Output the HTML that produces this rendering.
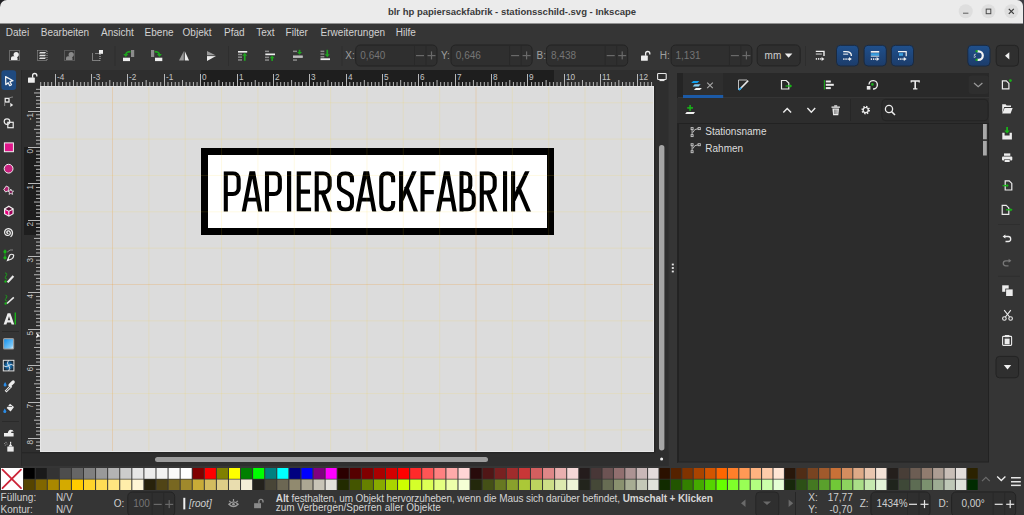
<!DOCTYPE html>
<html><head><meta charset="utf-8"><title>Inkscape</title>
<style>
html,body{margin:0;padding:0;background:#353535;}
#app{position:relative;width:1024px;height:515px;overflow:hidden;font-family:"Liberation Sans", sans-serif;}
#app svg{position:absolute;left:0;top:0;}
.t{position:absolute;white-space:nowrap;line-height:1;font-family:"Liberation Sans", sans-serif;}
svg text{font-family:"Liberation Sans", sans-serif;}
</style></head><body>
<div id="app">
<svg width="1024" height="515" viewBox="0 0 1024 515">
<style>.rl text{font-size:8.2px;fill:#c4c4c4;}</style>
<rect x="0" y="0" width="1024" height="515" fill="#353535"/><rect x="0" y="0" width="10" height="10" fill="#202024"/><rect x="1012" y="0" width="12" height="24" fill="#3c3c42"/><path d="M0,7 A7,7 0 0 1 7,0 H1017 A6,6 0 0 1 1023,6 V23.6 H0 Z" fill="#ebebeb"/><circle cx="965.7" cy="11.2" r="7" fill="#dedede"/><circle cx="988.4" cy="11.2" r="7" fill="#dedede"/><circle cx="1011.4" cy="11.2" r="7" fill="#dedede"/><rect x="963" y="12.6" width="5.4" height="1.3" fill="#7a7a7a"/><rect x="986.2" y="9.1" width="4.6" height="4.6" fill="none" stroke="#4a4a4a" stroke-width="1"/><path d="M1008.8,8.9 L1013.8,13.9 M1013.8,8.9 L1008.8,13.9" stroke="#3a3a3a" stroke-width="1.2"/><rect x="114.5" y="46" width="1" height="20" fill="#2e2e2e"/><rect x="228" y="46" width="1" height="20" fill="#2e2e2e"/><rect x="341.5" y="46" width="1" height="20" fill="#2e2e2e"/><rect x="805" y="46" width="1" height="20" fill="#2e2e2e"/><rect x="9.5" y="50.5" width="10" height="10" fill="none" stroke="#a0a0a0" stroke-width="1" stroke-dasharray="1 1"/><circle cx="16.2" cy="54.5" r="2.6" fill="#eeeeee"/><path d="M11,60 V57.8 Q11,56.3 13,56.3 H15.5 Q17.5,56.8 17.5,58 V60 Z" fill="#eeeeee"/><rect x="37.5" y="50.5" width="9.5" height="10" fill="none" stroke="#a0a0a0" stroke-width="1" stroke-dasharray="1 1"/><path d="M40,52 H46 L45,53.6 H39 Z M40,54.7 H46 L45,56.3 H39 Z M40,57.4 H46 L45,59 H39 Z" fill="#e0e0e0"/><rect x="64.5" y="50.5" width="10" height="10" fill="none" stroke="#7a7a7a" stroke-width="1" stroke-dasharray="1 1"/><circle cx="71.2" cy="54.5" r="2.6" fill="#8a8a8a"/><path d="M66,60 V57.8 Q66,56.3 68,56.3 H70.5 Q72.5,56.8 72.5,58 V60 Z" fill="#8a8a8a"/><path d="M92.5,53.5 V60.5 H100 V53.5 H95" fill="none" stroke="#c8c8c8" stroke-width="1" stroke-dasharray="1 1"/><rect x="99" y="50" width="4" height="3.8" fill="#f0f0f0"/><rect x="131" y="50" width="3.2" height="7" fill="#8c8c8c"/><rect x="123" y="57.7" width="7" height="3.4" fill="#eeeeee"/><path d="M130.5,51.6 Q126.3,51.6 125.8,54.5" fill="none" stroke="#1ea51e" stroke-width="1.6"/><path d="M123.3,54 H128.3 L125.8,57 Z" fill="#1ea51e"/><rect x="151" y="50" width="3.2" height="7" fill="#8c8c8c"/><rect x="155" y="57.7" width="7.3" height="3.4" fill="#eeeeee"/><path d="M154.7,51.6 Q158.9,51.6 159.4,54.5" fill="none" stroke="#1ea51e" stroke-width="1.6"/><path d="M156.9,54 H161.9 L159.4,57 Z" fill="#1ea51e"/><path d="M183.9,51 V60.6 H179 Z" fill="#9a9a9a"/><path d="M184.7,51 L189.1,60.6 H184.7 Z" fill="#eeeeee"/><path d="M184.3,50.5 V61.5" stroke="#353535" stroke-width="0.9" stroke-dasharray="1 1"/><path d="M207,51 L216,55.4 H207 Z" fill="#9a9a9a"/><path d="M207,56.1 H216 L207,61 Z" fill="#eeeeee"/><path d="M205.5,55.75 H217" stroke="#353535" stroke-width="0.9" stroke-dasharray="1 1"/><rect x="238" y="51" width="9.2" height="1.6" fill="#eeeeee"/><rect x="238" y="53.7" width="4" height="1.5" fill="#8c8c8c"/><rect x="238" y="56.4" width="4" height="1.5" fill="#8c8c8c"/><rect x="238" y="59.2" width="4" height="1.5" fill="#8c8c8c"/><rect x="243.9" y="55" width="1.7" height="5.8" fill="#1ea51e"/><path d="M242.3,55.8 H247.2 L244.75,52.8 Z" fill="#1ea51e"/><rect x="265" y="50.6" width="4" height="1.5" fill="#8c8c8c"/><rect x="265.3" y="53.5" width="9.7" height="1.7" fill="#eeeeee"/><rect x="265" y="56.6" width="4" height="1.5" fill="#8c8c8c"/><rect x="265" y="59.3" width="4" height="1.5" fill="#8c8c8c"/><rect x="271.3" y="57.5" width="1.7" height="3.4" fill="#1ea51e"/><path d="M269.7,58.2 H274.6 L272.15,55.4 Z" fill="#1ea51e"/><rect x="293" y="50.6" width="4" height="1.5" fill="#8c8c8c"/><rect x="293" y="55.6" width="9.7" height="2.2" fill="#8c8c8c" opacity="1"/><rect x="293" y="59.3" width="4" height="1.5" fill="#8c8c8c"/><rect x="293" y="55.6" width="9.7" height="2.2" fill="#bdbdbd"/><rect x="298.7" y="49.8" width="1.7" height="2.6" fill="#1ea51e"/><path d="M297.1,52 H302 L299.55,54.8 Z" fill="#1ea51e"/><rect x="320.5" y="50.6" width="3.8" height="1.5" fill="#8c8c8c"/><rect x="320.5" y="53.3" width="3.8" height="1.5" fill="#8c8c8c"/><rect x="320.5" y="56" width="3.8" height="1.5" fill="#8c8c8c"/><rect x="320.5" y="58.3" width="9.5" height="1.8" fill="#eeeeee"/><rect x="326.4" y="49.8" width="1.7" height="5" fill="#1ea51e"/><path d="M324.8,54.3 H329.7 L327.25,57.3 Z" fill="#1ea51e"/><rect x="355.7" y="45.0" width="81.30000000000001" height="21.0" rx="4.5" fill="#2f2f2f" stroke="#232323" stroke-width="1"/><rect x="414.0" y="45.5" width="1" height="20.0" fill="#292929"/><rect x="425.5" y="45.5" width="1" height="20.0" fill="#292929"/><rect x="416.0" y="55.0" width="8" height="1.2" fill="#6a6a6a"/><rect x="427.5" y="55.0" width="8" height="1.2" fill="#6a6a6a"/><rect x="430.9" y="51.4" width="1.2" height="8" fill="#6a6a6a"/><rect x="451.0" y="45.0" width="81.10000000000002" height="21.0" rx="4.5" fill="#2f2f2f" stroke="#232323" stroke-width="1"/><rect x="509.1" y="45.5" width="1" height="20.0" fill="#292929"/><rect x="520.6" y="45.5" width="1" height="20.0" fill="#292929"/><rect x="511.1" y="55.0" width="8" height="1.2" fill="#6a6a6a"/><rect x="522.6" y="55.0" width="8" height="1.2" fill="#6a6a6a"/><rect x="526.0" y="51.4" width="1.2" height="8" fill="#6a6a6a"/><rect x="546.5" y="45.0" width="81.20000000000005" height="21.0" rx="4.5" fill="#2f2f2f" stroke="#232323" stroke-width="1"/><rect x="604.7" y="45.5" width="1" height="20.0" fill="#292929"/><rect x="616.2" y="45.5" width="1" height="20.0" fill="#292929"/><rect x="606.7" y="55.0" width="8" height="1.2" fill="#6a6a6a"/><rect x="618.2" y="55.0" width="8" height="1.2" fill="#6a6a6a"/><rect x="621.6" y="51.4" width="1.2" height="8" fill="#6a6a6a"/><rect x="671.1" y="45.0" width="80.79999999999995" height="21.0" rx="4.5" fill="#2f2f2f" stroke="#232323" stroke-width="1"/><rect x="728.9" y="45.5" width="1" height="20.0" fill="#292929"/><rect x="740.4" y="45.5" width="1" height="20.0" fill="#292929"/><rect x="730.9" y="55.0" width="8" height="1.2" fill="#6a6a6a"/><rect x="742.4" y="55.0" width="8" height="1.2" fill="#6a6a6a"/><rect x="745.8" y="51.4" width="1.2" height="8" fill="#6a6a6a"/><rect x="641" y="55.6" width="6.8" height="5.2" rx="0.6" fill="#eeeeee"/><path d="M645.6,55.8 V53.6 A2.1,2.1 0 0 1 649.8,53.6 V54.6" fill="none" stroke="#eeeeee" stroke-width="1.3"/><rect x="757.2" y="44.9" width="43" height="21" rx="4.5" fill="#2f2f2f" stroke="#232323" stroke-width="1"/><path d="M784.8,53.6 H792.4 L788.6,57.7 Z" fill="#eeeeee"/><rect x="815.8" y="58.1" width="1.3" height="1.6" fill="#f0f0f0"/><rect x="818.0" y="58.1" width="1.3" height="1.6" fill="#f0f0f0"/><rect x="820.1999999999999" y="58.1" width="1.3" height="1.6" fill="#f0f0f0"/><path d="M821.5999999999999,56.9 L824.4,58.900000000000006 L821.5999999999999,60.900000000000006 Z" fill="#f0f0f0"/><path d="M815.8,51.4 H824.0 V56.1" fill="none" stroke="#f0f0f0" stroke-width="1.4"/><rect x="815.8" y="53.2" width="6" height="1.7" fill="#9a9a9a"/><defs><linearGradient id="bg1" x1="0" y1="0" x2="0" y2="1"><stop offset="0" stop-color="#20508c"/><stop offset="1" stop-color="#1c3c6a"/></linearGradient></defs><rect x="836.5" y="45.3" width="22" height="20.7" rx="4" fill="url(#bg1)" stroke="#1a2a40" stroke-width="1"/><rect x="843.2" y="58.3" width="1.3" height="1.6" fill="#f0f0f0"/><rect x="845.4000000000001" y="58.3" width="1.3" height="1.6" fill="#f0f0f0"/><rect x="847.6" y="58.3" width="1.3" height="1.6" fill="#f0f0f0"/><path d="M849.0,57.099999999999994 L851.8000000000001,59.099999999999994 L849.0,61.099999999999994 Z" fill="#f0f0f0"/><path d="M843.2,51.599999999999994 H846.2 Q851.4000000000001,51.599999999999994 851.4000000000001,56.0" fill="none" stroke="#f0f0f0" stroke-width="1.4"/><rect x="843.2" y="53.4" width="5" height="1.6" fill="#a8b8cc"/><rect x="864.1" y="45.3" width="22.199999999999932" height="20.7" rx="4" fill="url(#bg1)" stroke="#1a2a40" stroke-width="1"/><rect x="870.8000000000001" y="58.3" width="1.3" height="1.6" fill="#f0f0f0"/><rect x="873.0000000000001" y="58.3" width="1.3" height="1.6" fill="#f0f0f0"/><rect x="875.2" y="58.3" width="1.3" height="1.6" fill="#f0f0f0"/><path d="M876.6,57.099999999999994 L879.4000000000001,59.099999999999994 L876.6,61.099999999999994 Z" fill="#f0f0f0"/><rect x="870.8000000000001" y="51.0" width="8.4" height="1.6" fill="#f0f0f0"/><rect x="870.8000000000001" y="53.199999999999996" width="8.4" height="2.6" fill="#3aa0e0"/><rect x="870.8000000000001" y="55.8" width="8.4" height="0.8" fill="#f0f0f0"/><rect x="891.3" y="45.3" width="22.200000000000045" height="20.7" rx="4" fill="url(#bg1)" stroke="#1a2a40" stroke-width="1"/><rect x="898.0" y="58.3" width="1.3" height="1.6" fill="#f0f0f0"/><rect x="900.2" y="58.3" width="1.3" height="1.6" fill="#f0f0f0"/><rect x="902.4" y="58.3" width="1.3" height="1.6" fill="#f0f0f0"/><path d="M903.8,57.099999999999994 L906.6,59.099999999999994 L903.8,61.099999999999994 Z" fill="#f0f0f0"/><path d="M898.0,51.599999999999994 H906.2 V56.3" fill="none" stroke="#f0f0f0" stroke-width="1.2"/><rect x="899.0" y="53.199999999999996" width="4" height="2.6" fill="#3aa0e0"/><rect x="967.8" y="45.3" width="22.2" height="20.8" rx="4" fill="url(#bg1)" stroke="#1a2a40" stroke-width="1"/><path d="M977.3,51.3 H978.5 A4.3,4.3 0 0 1 978.5,59.9 H977.3" fill="none" stroke="#f4f4f4" stroke-width="2.2"/><rect x="975.6" y="50.2" width="2" height="2" fill="#19b319"/><rect x="975.6" y="58.8" width="2" height="2" fill="#19b319"/><path d="M975.8,54.2 Q973.8,54.2 974.2,55.4 Q975.8,56 975.2,57.2 Q974.4,57.6 973.6,57" fill="none" stroke="#e0e0e0" stroke-width="0.8"/><rect x="996.2" y="45.3" width="22.3" height="20.8" rx="4" fill="#2f2f2f" stroke="#232323" stroke-width="1"/><path d="M1009.3,52.2 V59.4 L1005,55.8 Z" fill="#f0f0f0"/><rect x="21" y="70" width="1.2" height="396" fill="#282828"/><rect x="1.4" y="70.3" width="14.7" height="19.6" rx="3" fill="#1f4a80"/><path d="M5.6,76.6 L13,80.7 L10,81.7 L11.5,84.7 L9.7,85.7 L8.2,82.7 L5.8,84.7 Z" fill="none" stroke="#f4f4f4" stroke-width="1.25" stroke-linejoin="round"/><rect x="5.2" y="98.4" width="3.8" height="3.6" fill="none" stroke="#ececec" stroke-width="1.3"/><path d="M9,98.2 Q11,97 13,97" fill="none" stroke="#9a9a9a" stroke-width="0.8"/><path d="M4.7,102.5 V106" stroke="#9a9a9a" stroke-width="0.9"/><path d="M10.3,102.8 V107 L13.2,105 Z" fill="#ececec"/><circle cx="7" cy="121.6" r="2.8" fill="none" stroke="#ececec" stroke-width="1.2"/><rect x="7.8" y="122.3" width="5.4" height="5.4" fill="none" stroke="#ececec" stroke-width="1.2"/><rect x="4.4" y="142.9" width="9" height="8.8" fill="#e0168a" stroke="#f2f2f2" stroke-width="1"/><circle cx="8.6" cy="168.7" r="4.4" fill="#c8217f" stroke="#f2f2f2" stroke-width="1"/><path d="M6.3,186 L9,187.5 L8.6,190.6 L5.6,192 L3.8,189.4 Z" fill="#b0206f" stroke="#f0f0f0" stroke-width="0.9"/><path d="M10.8,189 L11.6,191 L13.6,191.2 L12.1,192.5 L12.6,194.4 L10.8,193.4 L9,194.4 L9.5,192.5 L8,191.2 L10,191 Z" fill="#7a1550" stroke="#f0f0f0" stroke-width="0.8"/><path d="M8.85,205.6 L13.7,208.4 V214.1 L8.85,216.8 L4,214.1 V208.4 Z" fill="#f0f0f0"/><path d="M8.85,207 L12.2,208.9 L8.85,210.8 L5.5,208.9 Z" fill="#5a1538"/><path d="M5.2,209.9 L8.3,211.6 V215.3 L5.2,213.6 Z" fill="#e6007e"/><path d="M12.5,209.9 L9.4,211.6 V215.3 L12.5,213.6 Z" fill="#a0005a"/><path d="M8.20,232.95 L8.18,233.00 L8.15,233.05 L8.11,233.10 L8.06,233.14 L8.00,233.18 L7.94,233.22 L7.86,233.24 L7.79,233.26 L7.70,233.27 L7.62,233.26 L7.53,233.25 L7.44,233.22 L7.35,233.19 L7.26,233.14 L7.18,233.07 L7.10,233.00 L7.03,232.92 L6.96,232.82 L6.91,232.71 L6.87,232.60 L6.84,232.48 L6.82,232.35 L6.82,232.22 L6.83,232.08 L6.86,231.94 L6.91,231.80 L6.97,231.67 L7.05,231.54 L7.14,231.42 L7.25,231.30 L7.37,231.20 L7.51,231.10 L7.67,231.03 L7.83,230.96 L8.00,230.92 L8.18,230.89 L8.37,230.88 L8.55,230.89 L8.74,230.93 L8.93,230.98 L9.12,231.06 L9.30,231.16 L9.47,231.28 L9.63,231.42 L9.78,231.57 L9.91,231.75 L10.02,231.94 L10.11,232.15 L10.18,232.37 L10.23,232.60 L10.26,232.84 L10.26,233.08 L10.23,233.32 L10.17,233.57 L10.09,233.81 L9.98,234.04 L9.85,234.27 L9.69,234.48 L9.51,234.67 L9.30,234.85 L9.07,235.01 L8.83,235.14 L8.56,235.25 L8.29,235.33 L8.00,235.38 L7.71,235.40 L7.41,235.39 L7.11,235.35 L6.81,235.28 L6.52,235.17 L6.23,235.03 L5.97,234.86 L5.71,234.66 L5.48,234.43 L5.27,234.17 L5.09,233.90 L4.93,233.60 L4.81,233.28 L4.72,232.94 L4.67,232.60 L4.65,232.25 L4.67,231.89 L4.73,231.54 L4.82,231.18 L4.95,230.84 L5.13,230.51 L5.33,230.20 L5.57,229.90 L5.85,229.64 L6.15,229.40 L6.48,229.19 L6.83,229.01 L7.21,228.87 L7.60,228.77 L8.00,228.72 L8.41,228.70 L8.82,228.73 L9.23,228.80 L9.64,228.92 L10.03,229.08 L10.41,229.28 L10.77,229.52 L11.10,229.81 L11.41,230.12 L11.68,230.47 L11.92,230.86 L12.11,231.26 L12.26,231.69 L12.37,232.14 L12.43,232.60 L12.45,233.07 L12.41,233.54 L12.32,234.00 L12.18,234.46 L12.00,234.91 L11.76,235.34 L11.49,235.74 L11.16,236.11 L10.80,236.45 L10.40,236.76" fill="none" stroke="#ececec" stroke-width="1.3"/><path d="M5,249.5 V258" stroke="#1aa01a" stroke-width="0.9"/><circle cx="5" cy="251.7" r="1.6" fill="#19b319"/><circle cx="5" cy="257.8" r="1.6" fill="#19b319"/><path d="M7.3,252 Q10,249 13,250" fill="none" stroke="#9a9a9a" stroke-width="0.8"/><path d="M7.5,260.5 L9.6,255.2 Q11.6,253.4 13.6,255 Q14,257.6 11.6,259 Z" fill="none" stroke="#ececec" stroke-width="1.2"/><path d="M5,273 Q8,273 6,276 Q4,279 7,279" fill="none" stroke="#19a019" stroke-width="1"/><circle cx="5.5" cy="281.5" r="1.2" fill="#19b319"/><path d="M6.8,281.7 L12.6,275.2 L14.2,276.7 L8.4,283 Z" fill="#ececec"/><path d="M5.5,294.8 Q8,296 6,298.5 Q4,301 7.2,301" fill="none" stroke="#19a019" stroke-width="1"/><circle cx="5.6" cy="303.5" r="1.2" fill="#19b319"/><path d="M7,303.5 L13.8,297.3" stroke="#ececec" stroke-width="1.6"/><path d="M3.6,324.6 L7.6,313.2 H10.4 L14.2,324.6 H11.6 L10.9,322.4 H7.1 L6.4,324.6 Z M7.7,320.3 H10.3 L9,316.2 Z" fill="#ececec" fill-rule="evenodd"/><rect x="14.6" y="312.5" width="1.4" height="12" fill="#19b319"/><rect x="2" y="331" width="17" height="1" fill="#2a2a2a"/><defs><linearGradient id="gr1" x1="0" y1="0" x2="1" y2="1"><stop offset="0" stop-color="#0a8ef0"/><stop offset="0.75" stop-color="#7cc8f8"/><stop offset="1" stop-color="#ffffff"/></linearGradient></defs><rect x="3.6" y="338.6" width="10" height="10.4" rx="1" fill="url(#gr1)" stroke="#9a9a9a" stroke-width="1.2"/><defs><radialGradient id="mg1"><stop offset="0" stop-color="#2aa0f0"/><stop offset="0.6" stop-color="#155a90"/><stop offset="1" stop-color="#1a2a38"/></radialGradient></defs><rect x="3.3" y="360.3" width="10.6" height="10.6" fill="url(#mg1)" stroke="#e0e0e0" stroke-width="1"/><path d="M8.6,360.3 Q6.2,363 8.6,365.6 Q11,368.2 8.6,370.9 M3.3,365.6 Q6.2,368 8.6,365.6 Q11,363.2 13.9,365.6" fill="none" stroke="#e8e8e8" stroke-width="0.9"/><path d="M5.1,382 Q3.6,384.3 3.6,385 A1.5,1.5 0 0 0 6.6,385 Q6.6,384.3 5.1,382 Z" fill="#2b8ce6"/><path d="M5.6,391.6 L10.8,386.4" stroke="#ececec" stroke-width="2.6"/><path d="M6.3,390.9 L10.4,386.8" stroke="#353535" stroke-width="0.9"/><path d="M10,385.2 L13.2,382" stroke="#ececec" stroke-width="3.2" stroke-linecap="round"/><path d="M9.2,384.6 L11.8,387.2" stroke="#ececec" stroke-width="1.2"/><path d="M6.6,408 L10,403.8 L14,407 L10.6,411.4 Z" fill="#ececec"/><path d="M7.4,406.5 H12" stroke="#353535" stroke-width="0.7"/><path d="M4.8,408.5 Q3.3,410.8 3.3,411.6 A1.5,1.5 0 0 0 6.3,411.6 Q6.3,410.8 4.8,408.5 Z" fill="#2b8ce6"/><rect x="2" y="421" width="17" height="1" fill="#2a2a2a"/><path d="M4,436.5 V433 H7.8 Q8.2,430 10.8,429.8 Q13.4,430 13.6,431.8 Q12,431 11,432 Q10.5,433 13.6,433 V436.5 Z" fill="#ececec"/><rect x="7.3" y="446.6" width="6.4" height="5" fill="#ececec"/><path d="M8.4,446.6 L10.5,443.6 L12.6,446.6 Z" fill="#ececec"/><rect x="10" y="441.8" width="1.2" height="2" fill="#ececec"/><circle cx="4.6" cy="443.5" r="0.6" fill="#9a9a9a"/><circle cx="6" cy="442.4" r="0.6" fill="#9a9a9a"/><circle cx="5.3" cy="445" r="0.6" fill="#9a9a9a"/><circle cx="7" cy="444" r="0.6" fill="#9a9a9a"/><rect x="22" y="70" width="632" height="16" fill="#2e2e2e"/><rect x="22" y="86" width="18" height="366" fill="#2e2e2e"/><rect x="201" y="70" width="353" height="16" fill="#1e1e1e"/><rect x="24" y="147" width="16" height="88" fill="#1e1e1e"/><rect x="28" y="77.6" width="6.8" height="5.2" rx="0.6" fill="#eeeeee"/><path d="M32.6,77.8 V75.6 A2.1,2.1 0 0 1 36.8,75.6 V76.6" fill="none" stroke="#eeeeee" stroke-width="1.3"/><g class="rl" fill="#b8b8b8"><rect x="40.22" y="82" width="1" height="4"/><rect x="43.85" y="82" width="1" height="4"/><rect x="47.49" y="82" width="1" height="4"/><rect x="51.12" y="82" width="1" height="4"/><rect x="55" y="74" width="1" height="12"/><text x="57" y="79.6">-4</text><rect x="58.4" y="82" width="1" height="4"/><rect x="62.03" y="82" width="1" height="4"/><rect x="65.67" y="82" width="1" height="4"/><rect x="69.3" y="82" width="1" height="4"/><rect x="72.94" y="80" width="1" height="6"/><rect x="76.58" y="82" width="1" height="4"/><rect x="80.21" y="82" width="1" height="4"/><rect x="83.85" y="82" width="1" height="4"/><rect x="87.48" y="82" width="1" height="4"/><rect x="91" y="74" width="1" height="12"/><text x="93" y="79.6">-3</text><rect x="94.76" y="82" width="1" height="4"/><rect x="98.39" y="82" width="1" height="4"/><rect x="102.03" y="82" width="1" height="4"/><rect x="105.66" y="82" width="1" height="4"/><rect x="109.3" y="80" width="1" height="6"/><rect x="112.94" y="82" width="1" height="4"/><rect x="116.57" y="82" width="1" height="4"/><rect x="120.21" y="82" width="1" height="4"/><rect x="123.84" y="82" width="1" height="4"/><rect x="127" y="74" width="1" height="12"/><text x="129" y="79.6">-2</text><rect x="131.12" y="82" width="1" height="4"/><rect x="134.75" y="82" width="1" height="4"/><rect x="138.39" y="82" width="1" height="4"/><rect x="142.02" y="82" width="1" height="4"/><rect x="145.66" y="80" width="1" height="6"/><rect x="149.3" y="82" width="1" height="4"/><rect x="152.93" y="82" width="1" height="4"/><rect x="156.57" y="82" width="1" height="4"/><rect x="160.2" y="82" width="1" height="4"/><rect x="164" y="74" width="1" height="12"/><text x="166" y="79.6">-1</text><rect x="167.48" y="82" width="1" height="4"/><rect x="171.11" y="82" width="1" height="4"/><rect x="174.75" y="82" width="1" height="4"/><rect x="178.38" y="82" width="1" height="4"/><rect x="182.02" y="80" width="1" height="6"/><rect x="185.66" y="82" width="1" height="4"/><rect x="189.29" y="82" width="1" height="4"/><rect x="192.93" y="82" width="1" height="4"/><rect x="196.56" y="82" width="1" height="4"/><rect x="200" y="74" width="1" height="12"/><text x="202" y="79.6">0</text><rect x="203.84" y="82" width="1" height="4"/><rect x="207.47" y="82" width="1" height="4"/><rect x="211.11" y="82" width="1" height="4"/><rect x="214.74" y="82" width="1" height="4"/><rect x="218.38" y="80" width="1" height="6"/><rect x="222.02" y="82" width="1" height="4"/><rect x="225.65" y="82" width="1" height="4"/><rect x="229.29" y="82" width="1" height="4"/><rect x="232.92" y="82" width="1" height="4"/><rect x="237" y="74" width="1" height="12"/><text x="239" y="79.6">1</text><rect x="240.2" y="82" width="1" height="4"/><rect x="243.83" y="82" width="1" height="4"/><rect x="247.47" y="82" width="1" height="4"/><rect x="251.1" y="82" width="1" height="4"/><rect x="254.74" y="80" width="1" height="6"/><rect x="258.38" y="82" width="1" height="4"/><rect x="262.01" y="82" width="1" height="4"/><rect x="265.65" y="82" width="1" height="4"/><rect x="269.28" y="82" width="1" height="4"/><rect x="273" y="74" width="1" height="12"/><text x="275" y="79.6">2</text><rect x="276.56" y="82" width="1" height="4"/><rect x="280.19" y="82" width="1" height="4"/><rect x="283.83" y="82" width="1" height="4"/><rect x="287.46" y="82" width="1" height="4"/><rect x="291.1" y="80" width="1" height="6"/><rect x="294.74" y="82" width="1" height="4"/><rect x="298.37" y="82" width="1" height="4"/><rect x="302.01" y="82" width="1" height="4"/><rect x="305.64" y="82" width="1" height="4"/><rect x="309" y="74" width="1" height="12"/><text x="311" y="79.6">3</text><rect x="312.92" y="82" width="1" height="4"/><rect x="316.55" y="82" width="1" height="4"/><rect x="320.19" y="82" width="1" height="4"/><rect x="323.82" y="82" width="1" height="4"/><rect x="327.46" y="80" width="1" height="6"/><rect x="331.1" y="82" width="1" height="4"/><rect x="334.73" y="82" width="1" height="4"/><rect x="338.37" y="82" width="1" height="4"/><rect x="342.0" y="82" width="1" height="4"/><rect x="346" y="74" width="1" height="12"/><text x="348" y="79.6">4</text><rect x="349.28" y="82" width="1" height="4"/><rect x="352.91" y="82" width="1" height="4"/><rect x="356.55" y="82" width="1" height="4"/><rect x="360.18" y="82" width="1" height="4"/><rect x="363.82" y="80" width="1" height="6"/><rect x="367.46" y="82" width="1" height="4"/><rect x="371.09" y="82" width="1" height="4"/><rect x="374.73" y="82" width="1" height="4"/><rect x="378.36" y="82" width="1" height="4"/><rect x="382" y="74" width="1" height="12"/><text x="384" y="79.6">5</text><rect x="385.64" y="82" width="1" height="4"/><rect x="389.27" y="82" width="1" height="4"/><rect x="392.91" y="82" width="1" height="4"/><rect x="396.54" y="82" width="1" height="4"/><rect x="400.18" y="80" width="1" height="6"/><rect x="403.82" y="82" width="1" height="4"/><rect x="407.45" y="82" width="1" height="4"/><rect x="411.09" y="82" width="1" height="4"/><rect x="414.72" y="82" width="1" height="4"/><rect x="418" y="74" width="1" height="12"/><text x="420" y="79.6">6</text><rect x="422.0" y="82" width="1" height="4"/><rect x="425.63" y="82" width="1" height="4"/><rect x="429.27" y="82" width="1" height="4"/><rect x="432.9" y="82" width="1" height="4"/><rect x="436.54" y="80" width="1" height="6"/><rect x="440.18" y="82" width="1" height="4"/><rect x="443.81" y="82" width="1" height="4"/><rect x="447.45" y="82" width="1" height="4"/><rect x="451.08" y="82" width="1" height="4"/><rect x="455" y="74" width="1" height="12"/><text x="457" y="79.6">7</text><rect x="458.36" y="82" width="1" height="4"/><rect x="461.99" y="82" width="1" height="4"/><rect x="465.63" y="82" width="1" height="4"/><rect x="469.26" y="82" width="1" height="4"/><rect x="472.9" y="80" width="1" height="6"/><rect x="476.54" y="82" width="1" height="4"/><rect x="480.17" y="82" width="1" height="4"/><rect x="483.81" y="82" width="1" height="4"/><rect x="487.44" y="82" width="1" height="4"/><rect x="491" y="74" width="1" height="12"/><text x="493" y="79.6">8</text><rect x="494.72" y="82" width="1" height="4"/><rect x="498.35" y="82" width="1" height="4"/><rect x="501.99" y="82" width="1" height="4"/><rect x="505.62" y="82" width="1" height="4"/><rect x="509.26" y="80" width="1" height="6"/><rect x="512.9" y="82" width="1" height="4"/><rect x="516.53" y="82" width="1" height="4"/><rect x="520.17" y="82" width="1" height="4"/><rect x="523.8" y="82" width="1" height="4"/><rect x="527" y="74" width="1" height="12"/><text x="529" y="79.6">9</text><rect x="531.08" y="82" width="1" height="4"/><rect x="534.71" y="82" width="1" height="4"/><rect x="538.35" y="82" width="1" height="4"/><rect x="541.98" y="82" width="1" height="4"/><rect x="545.62" y="80" width="1" height="6"/><rect x="549.26" y="82" width="1" height="4"/><rect x="552.89" y="82" width="1" height="4"/><rect x="556.53" y="82" width="1" height="4"/><rect x="560.16" y="82" width="1" height="4"/><rect x="564" y="74" width="1" height="12"/><text x="566" y="79.6">10</text><rect x="567.44" y="82" width="1" height="4"/><rect x="571.07" y="82" width="1" height="4"/><rect x="574.71" y="82" width="1" height="4"/><rect x="578.34" y="82" width="1" height="4"/><rect x="581.98" y="80" width="1" height="6"/><rect x="585.62" y="82" width="1" height="4"/><rect x="589.25" y="82" width="1" height="4"/><rect x="592.89" y="82" width="1" height="4"/><rect x="596.52" y="82" width="1" height="4"/><rect x="600" y="74" width="1" height="12"/><text x="602" y="79.6">11</text><rect x="603.8" y="82" width="1" height="4"/><rect x="607.43" y="82" width="1" height="4"/><rect x="611.07" y="82" width="1" height="4"/><rect x="614.7" y="82" width="1" height="4"/><rect x="618.34" y="80" width="1" height="6"/><rect x="621.98" y="82" width="1" height="4"/><rect x="625.61" y="82" width="1" height="4"/><rect x="629.25" y="82" width="1" height="4"/><rect x="632.88" y="82" width="1" height="4"/><rect x="637" y="74" width="1" height="12"/><text x="639" y="79.6">12</text><rect x="640.16" y="82" width="1" height="4"/><rect x="643.79" y="82" width="1" height="4"/><rect x="647.43" y="82" width="1" height="4"/><rect x="651.06" y="82" width="1" height="4"/></g><g class="rl" fill="#b8b8b8"><rect x="36" y="88.82" width="4" height="1"/><rect x="34" y="92.46" width="6" height="1"/><rect x="36" y="96.1" width="4" height="1"/><rect x="36" y="99.73" width="4" height="1"/><rect x="36" y="103.37" width="4" height="1"/><rect x="36" y="107.0" width="4" height="1"/><rect x="28" y="111" width="12" height="1"/><text transform="translate(33.4 113) rotate(-90)" text-anchor="end">-1</text><rect x="36" y="114.28" width="4" height="1"/><rect x="36" y="117.91" width="4" height="1"/><rect x="36" y="121.55" width="4" height="1"/><rect x="36" y="125.18" width="4" height="1"/><rect x="34" y="128.82" width="6" height="1"/><rect x="36" y="132.46" width="4" height="1"/><rect x="36" y="136.09" width="4" height="1"/><rect x="36" y="139.73" width="4" height="1"/><rect x="36" y="143.36" width="4" height="1"/><rect x="28" y="147" width="12" height="1"/><text transform="translate(33.4 149) rotate(-90)" text-anchor="end">0</text><rect x="36" y="150.64" width="4" height="1"/><rect x="36" y="154.27" width="4" height="1"/><rect x="36" y="157.91" width="4" height="1"/><rect x="36" y="161.54" width="4" height="1"/><rect x="34" y="165.18" width="6" height="1"/><rect x="36" y="168.82" width="4" height="1"/><rect x="36" y="172.45" width="4" height="1"/><rect x="36" y="176.09" width="4" height="1"/><rect x="36" y="179.72" width="4" height="1"/><rect x="28" y="183" width="12" height="1"/><text transform="translate(33.4 185) rotate(-90)" text-anchor="end">1</text><rect x="36" y="187.0" width="4" height="1"/><rect x="36" y="190.63" width="4" height="1"/><rect x="36" y="194.27" width="4" height="1"/><rect x="36" y="197.9" width="4" height="1"/><rect x="34" y="201.54" width="6" height="1"/><rect x="36" y="205.18" width="4" height="1"/><rect x="36" y="208.81" width="4" height="1"/><rect x="36" y="212.45" width="4" height="1"/><rect x="36" y="216.08" width="4" height="1"/><rect x="28" y="220" width="12" height="1"/><text transform="translate(33.4 222) rotate(-90)" text-anchor="end">2</text><rect x="36" y="223.36" width="4" height="1"/><rect x="36" y="226.99" width="4" height="1"/><rect x="36" y="230.63" width="4" height="1"/><rect x="36" y="234.26" width="4" height="1"/><rect x="34" y="237.9" width="6" height="1"/><rect x="36" y="241.54" width="4" height="1"/><rect x="36" y="245.17" width="4" height="1"/><rect x="36" y="248.81" width="4" height="1"/><rect x="36" y="252.44" width="4" height="1"/><rect x="28" y="256" width="12" height="1"/><text transform="translate(33.4 258) rotate(-90)" text-anchor="end">3</text><rect x="36" y="259.72" width="4" height="1"/><rect x="36" y="263.35" width="4" height="1"/><rect x="36" y="266.99" width="4" height="1"/><rect x="36" y="270.62" width="4" height="1"/><rect x="34" y="274.26" width="6" height="1"/><rect x="36" y="277.9" width="4" height="1"/><rect x="36" y="281.53" width="4" height="1"/><rect x="36" y="285.17" width="4" height="1"/><rect x="36" y="288.8" width="4" height="1"/><rect x="28" y="292" width="12" height="1"/><text transform="translate(33.4 294) rotate(-90)" text-anchor="end">4</text><rect x="36" y="296.08" width="4" height="1"/><rect x="36" y="299.71" width="4" height="1"/><rect x="36" y="303.35" width="4" height="1"/><rect x="36" y="306.98" width="4" height="1"/><rect x="34" y="310.62" width="6" height="1"/><rect x="36" y="314.26" width="4" height="1"/><rect x="36" y="317.89" width="4" height="1"/><rect x="36" y="321.53" width="4" height="1"/><rect x="36" y="325.16" width="4" height="1"/><rect x="28" y="329" width="12" height="1"/><text transform="translate(33.4 331) rotate(-90)" text-anchor="end">5</text><rect x="36" y="332.44" width="4" height="1"/><rect x="36" y="336.07" width="4" height="1"/><rect x="36" y="339.71" width="4" height="1"/><rect x="36" y="343.34" width="4" height="1"/><rect x="34" y="346.98" width="6" height="1"/><rect x="36" y="350.62" width="4" height="1"/><rect x="36" y="354.25" width="4" height="1"/><rect x="36" y="357.89" width="4" height="1"/><rect x="36" y="361.52" width="4" height="1"/><rect x="28" y="365" width="12" height="1"/><text transform="translate(33.4 367) rotate(-90)" text-anchor="end">6</text><rect x="36" y="368.8" width="4" height="1"/><rect x="36" y="372.43" width="4" height="1"/><rect x="36" y="376.07" width="4" height="1"/><rect x="36" y="379.7" width="4" height="1"/><rect x="34" y="383.34" width="6" height="1"/><rect x="36" y="386.98" width="4" height="1"/><rect x="36" y="390.61" width="4" height="1"/><rect x="36" y="394.25" width="4" height="1"/><rect x="36" y="397.88" width="4" height="1"/><rect x="28" y="402" width="12" height="1"/><text transform="translate(33.4 404) rotate(-90)" text-anchor="end">7</text><rect x="36" y="405.16" width="4" height="1"/><rect x="36" y="408.79" width="4" height="1"/><rect x="36" y="412.43" width="4" height="1"/><rect x="36" y="416.06" width="4" height="1"/><rect x="34" y="419.7" width="6" height="1"/><rect x="36" y="423.34" width="4" height="1"/><rect x="36" y="426.97" width="4" height="1"/><rect x="36" y="430.61" width="4" height="1"/><rect x="36" y="434.24" width="4" height="1"/><rect x="28" y="438" width="12" height="1"/><text transform="translate(33.4 440) rotate(-90)" text-anchor="end">8</text><rect x="36" y="441.52" width="4" height="1"/><rect x="36" y="445.15" width="4" height="1"/><rect x="36" y="448.79" width="4" height="1"/></g><defs><clipPath id="cv"><rect x="40" y="86" width="614" height="366"/></clipPath><clipPath id="tx"><rect x="200" y="171.2" width="360" height="40.4"/></clipPath></defs><g clip-path="url(#cv)"><rect x="40" y="86" width="614" height="366" fill="#dcdcdc"/><rect x="204.5" y="151.5" width="346" height="80" fill="#ffffff" stroke="#000" stroke-width="7"/><g clip-path="url(#tx)" fill="none" stroke="#000" stroke-width="4.1" stroke-linejoin="miter" stroke-miterlimit="10"><path d="M225.80,213 V173.25 H233.00 A5.65,5.65 0 0 1 238.65,178.9 V188.35 A5.65,5.65 0 0 1 233.00,194 H225.80"/><path d="M243.30,214 L252.80,165 M260.65,214 L251.90,165"/><path d="M246.00,199.6 H258.00" stroke-width="3.8"/><path d="M267.00,213 V173.25 H274.20 A5.65,5.65 0 0 1 279.85,178.9 V188.35 A5.65,5.65 0 0 1 274.20,194 H267.00"/><rect x="287" y="170" width="4.20" height="43" stroke="none" fill="#000"/><path d="M311.1,173.25 H298.75 V209.45 H311.1 M298.75,191.65 H310"/><path d="M316.75,213 V173.25 H323.15 A6.5,6.5 0 0 1 329.65,179.75 V186.05 A6.5,6.5 0 0 1 323.15,192.55 H316.75"/><path d="M322.10,191 L330.55,213.5"/><path d="M352,182.3 V179 Q352,173.25 345.5,173.25 Q339,173.25 339,179 V184.5 Q339,188 342,190 L349,194 Q352,196 352,199.5 V203.5 Q352,209.45 345.5,209.45 Q339,209.45 339,203.5 V201"/><path d="M357.30,214 L366.80,165 M374.65,214 L365.90,165"/><path d="M360.00,199.6 H372.00" stroke-width="3.8"/><path d="M393.15,182.3 V179 Q393.15,173.25 387.2,173.25 Q381.25,173.25 381.25,179 V203.5 Q381.25,209.45 387.2,209.45 Q393.15,209.45 393.15,203.5 V201"/><path d="M401.10,213 V165"/><path d="M401.60,200 L417.20,165"/><path d="M406.00,186.5 L416.80,214"/><path d="M422.55,213 V173.25 H435.4 M422.55,192.1 H433.8"/><path d="M437.80,214 L447.30,165 M455.15,214 L446.40,165"/><path d="M440.50,199.6 H452.50" stroke-width="3.8"/><rect x="459.5" y="170" width="4.00" height="43" stroke="none" fill="#000"/><path d="M461.5,173.25 H465 A5.3,5.3 0 0 1 470.3,178.55 V185.7 A5.3,5.3 0 0 1 465,191 H461.5 M461.5,191 H467.6 A6.2,6.2 0 0 1 473.8,197.2 V203.25 A6.2,6.2 0 0 1 467.6,209.45 H461.5"/><path d="M481.80,213 V173.25 H488.20 A6.5,6.5 0 0 1 494.70,179.75 V186.05 A6.5,6.5 0 0 1 488.20,192.55 H481.80"/><path d="M487.15,191 L496.00,213.5"/><rect x="503" y="170" width="4.10" height="43" stroke="none" fill="#000"/><path d="M513.10,213 V165"/><path d="M513.60,200 L530.20,165"/><path d="M518.00,186.5 L529.80,214"/></g><rect x="75.65" y="86" width="1" height="366" fill="rgba(255,215,30,0.12)"/><rect x="112.00" y="86" width="1" height="366" fill="rgba(240,140,20,0.2)"/><rect x="148.35" y="86" width="1" height="366" fill="rgba(255,215,30,0.12)"/><rect x="184.70" y="86" width="1" height="366" fill="rgba(255,215,30,0.12)"/><rect x="221.05" y="86" width="1" height="366" fill="rgba(255,215,30,0.12)"/><rect x="257.40" y="86" width="1" height="366" fill="rgba(255,215,30,0.12)"/><rect x="293.75" y="86" width="1" height="366" fill="rgba(255,215,30,0.12)"/><rect x="330.10" y="86" width="1" height="366" fill="rgba(255,215,30,0.12)"/><rect x="366.45" y="86" width="1" height="366" fill="rgba(255,215,30,0.12)"/><rect x="402.80" y="86" width="1" height="366" fill="rgba(255,215,30,0.12)"/><rect x="439.15" y="86" width="1" height="366" fill="rgba(255,215,30,0.12)"/><rect x="475.50" y="86" width="1" height="366" fill="rgba(240,140,20,0.2)"/><rect x="511.85" y="86" width="1" height="366" fill="rgba(255,215,30,0.12)"/><rect x="548.20" y="86" width="1" height="366" fill="rgba(255,215,30,0.12)"/><rect x="584.55" y="86" width="1" height="366" fill="rgba(255,215,30,0.12)"/><rect x="620.90" y="86" width="1" height="366" fill="rgba(255,215,30,0.12)"/><rect x="40" y="102.25" width="614" height="1" fill="rgba(255,215,30,0.12)"/><rect x="40" y="138.60" width="614" height="1" fill="rgba(255,215,30,0.12)"/><rect x="40" y="174.95" width="614" height="1" fill="rgba(255,215,30,0.12)"/><rect x="40" y="211.30" width="614" height="1" fill="rgba(255,215,30,0.12)"/><rect x="40" y="247.65" width="614" height="1" fill="rgba(255,215,30,0.12)"/><rect x="40" y="284.00" width="614" height="1" fill="rgba(240,140,20,0.2)"/><rect x="40" y="320.35" width="614" height="1" fill="rgba(255,215,30,0.12)"/><rect x="40" y="356.70" width="614" height="1" fill="rgba(255,215,30,0.12)"/><rect x="40" y="393.05" width="614" height="1" fill="rgba(255,215,30,0.12)"/><rect x="40" y="429.40" width="614" height="1" fill="rgba(255,215,30,0.12)"/><rect x="40" y="86" width="614" height="1" fill="#e7e7e7"/><rect x="40" y="451" width="614" height="1" fill="#e7e7e7"/><rect x="40" y="86" width="1" height="366" fill="#e7e7e7"/><rect x="653" y="86" width="1" height="366" fill="#e7e7e7"/></g><rect x="654" y="70" width="14.5" height="396" fill="#2e2e2e"/><rect x="22" y="452" width="646.5" height="14" fill="#2e2e2e"/><rect x="654" y="86" width="1.5" height="367" fill="#262626"/><rect x="22" y="452" width="633" height="1.2" fill="#262626"/><rect x="657.6" y="73.5" width="8.6" height="6" rx="0.8" fill="none" stroke="#e6e6e6" stroke-width="1.1"/><rect x="659.5" y="79.8" width="5" height="1.3" fill="#e6e6e6"/><rect x="659" y="145" width="5.4" height="305.5" rx="2.7" fill="#a6a6a6"/><circle cx="661.6" cy="459" r="1.5" fill="#f0f0f0"/><rect x="155" y="457" width="333" height="5" rx="2.5" fill="#9c9c9c"/><rect x="671.8" y="263.6" width="2" height="1.8" fill="#e6e6e6"/><rect x="671.8" y="267.1" width="2" height="1.8" fill="#e6e6e6"/><rect x="671.8" y="270.6" width="2" height="1.8" fill="#e6e6e6"/><rect x="677" y="73" width="1" height="390" fill="#232323"/><rect x="677" y="73" width="312" height="24" fill="#242424"/><rect x="683" y="73" width="306" height="24" fill="#292929"/><rect x="683" y="73" width="40.2" height="24" fill="#2e2e2e"/><rect x="683" y="95" width="40.2" height="3" fill="#1c5aa6"/><rect x="677" y="98" width="312" height="25" fill="#2d2d2d"/><path d="M693.2,81.1 H699.4 L697.4,83 H691.2 Z" fill="#0fa0f0"/><path d="M694.6,84.2 H700.6 L698.6,86.4 H692.6 Z" fill="#86cdf2"/><path d="M695.9,87.9 H701.9 L699.9,90 H693.9 Z" fill="#f2f2f2"/><path d="M707.2,82.6 L712.8,88.2 M712.8,82.6 L707.2,88.2" stroke="#a8a8a8" stroke-width="1.1"/><path d="M738.5,90 V80 H747" fill="none" stroke="#cfcfcf" stroke-width="0.9"/><path d="M739.5,89.5 L748.2,80.6" stroke="#e8e8e8" stroke-width="1.6"/><path d="M738.8,90.2 L741.3,87.7" stroke="#2ea3e6" stroke-width="1.8"/><path d="M781.5,80.5 H786.2 L788.8,83 V89 H781.5 Z" fill="none" stroke="#ececec" stroke-width="1.2"/><path d="M785.5,86 H791.5" stroke="#19b319" stroke-width="1.3"/><path d="M790,84.3 L792,86 L790,87.7 Z" fill="#19b319"/><rect x="823.8" y="80" width="1.2" height="9.6" fill="#19a019"/><rect x="825.8" y="80.5" width="5" height="2" fill="#ececec"/><rect x="825.8" y="83.8" width="8" height="2" fill="#ececec"/><rect x="825.8" y="87.1" width="5" height="2" fill="#ececec"/><path d="M869,84.5 A4.2,4.2 0 1 1 873,89" fill="none" stroke="#ececec" stroke-width="1.4"/><rect x="866.8" y="86" width="3.6" height="3.6" fill="#ececec"/><circle cx="872.4" cy="84.4" r="1.3" fill="#19b319"/><path d="M910.6,80.2 H919.8 V82.6 H918.6 V81.7 H916 V88.3 H917.4 V89.5 H913 V88.3 H914.4 V81.7 H911.8 V82.6 H910.6 Z" fill="#ececec"/><rect x="968.6" y="75.4" width="20" height="18.7" rx="3" fill="#2e2e2e"/><path d="M974,83 L978.2,86.8 L982.4,83" fill="none" stroke="#9a9a9a" stroke-width="1.2"/><path d="M686.6,112 H695 L693.6,114 H685.2 Z" fill="#f0f0f0"/><rect x="689.3" y="105" width="1.6" height="5.8" fill="#19b319"/><rect x="687.2" y="107.1" width="5.8" height="1.6" fill="#19b319"/><path d="M783.3,112.5 L787.2,108.4 L791.1,112.5" fill="none" stroke="#ececec" stroke-width="1.4"/><path d="M807.4,108 L811.3,112.2 L815.2,108" fill="none" stroke="#ececec" stroke-width="1.4"/><rect x="831.5" y="106.5" width="8.4" height="1.3" fill="#ececec"/><rect x="834.2" y="105.3" width="3" height="1.3" fill="#ececec"/><path d="M832.4,108.4 H839 L838.3,115.2 H833.1 Z" fill="#ececec"/><path d="M834.4,109.5 V114 M835.7,109.5 V114 M837,109.5 V114" stroke="#2e2e2e" stroke-width="0.5"/><rect x="850" y="99" width="1" height="22" fill="#262626"/><circle cx="865.7" cy="110.1" r="3.2" fill="none" stroke="#ececec" stroke-width="2.2" stroke-dasharray="1.3 1.2"/><circle cx="865.7" cy="110.1" r="2.6" fill="none" stroke="#ececec" stroke-width="1.2"/><rect x="881.9" y="99.3" width="106.2" height="21.4" rx="4" fill="#2b2b2b" stroke="#242424" stroke-width="1"/><circle cx="889" cy="109" r="3.6" fill="none" stroke="#ececec" stroke-width="1.3"/><path d="M891.6,111.6 L895,115" stroke="#ececec" stroke-width="1.5"/><rect x="678.5" y="123.5" width="310" height="338.5" fill="#2c2c2c" stroke="#222222" stroke-width="1"/><rect x="691.1" y="127.6" width="2" height="2" fill="none" stroke="#c8c8c8" stroke-width="0.9"/><rect x="698.1" y="127.6" width="2.2" height="2" fill="none" stroke="#c8c8c8" stroke-width="0.9"/><rect x="691.1" y="134.6" width="2" height="2" fill="none" stroke="#c8c8c8" stroke-width="0.9"/><path d="M692.1,129.7 V134.5 M692.8000000000001,132.6 Q694.1,128.7 698.0,128.7" fill="none" stroke="#c8c8c8" stroke-width="0.9"/><rect x="691.1" y="143.7" width="2" height="2" fill="none" stroke="#c8c8c8" stroke-width="0.9"/><rect x="698.1" y="143.7" width="2.2" height="2" fill="none" stroke="#c8c8c8" stroke-width="0.9"/><rect x="691.1" y="150.7" width="2" height="2" fill="none" stroke="#c8c8c8" stroke-width="0.9"/><path d="M692.1,145.79999999999998 V150.6 M692.8000000000001,148.7 Q694.1,144.79999999999998 698.0,144.79999999999998" fill="none" stroke="#c8c8c8" stroke-width="0.9"/><rect x="983" y="124" width="3.8" height="15.3" fill="#a8a8a8"/><rect x="983" y="140.9" width="3.8" height="14.6" fill="#a8a8a8"/><rect x="989" y="70" width="35" height="396" fill="#353535"/><path d="M1002.4,80.8 H1006.3 L1008.9,83.4 V88.8 H1002.4 Z" fill="none" stroke="#ececec" stroke-width="1.2"/><circle cx="1010.4" cy="80.6" r="1.4" fill="#19b319"/><path d="M1002.2,104.3 H1005.6 L1006.6,105.5 H1011 V107 H1004.2 L1002.2,113.5 Z" fill="#ececec"/><path d="M1004.6,108 H1012.6 L1010.6,113.5 H1002.2 Z" fill="#ececec"/><rect x="1006.2" y="127" width="1.8" height="4" fill="#19b319"/><path d="M1004.3,130.6 H1009.9 L1007.1,133.6 Z" fill="#19b319"/><path d="M1002.3,132.8 H1004.6 V135.6 H1009.6 V132.8 H1011.9 V139.4 H1002.3 Z" fill="#ececec"/><rect x="1004" y="153.4" width="6.3" height="2.4" fill="#ececec"/><rect x="1002" y="156.4" width="10.3" height="4.2" rx="1" fill="#ececec"/><rect x="1004" y="159.4" width="6.3" height="2.6" fill="#353535"/><rect x="1004.6" y="160" width="5.1" height="2" fill="#ececec"/><path d="M1005.2,180.8 H1009.2 L1011.8,183.4 V190 H1005.2 Z" fill="none" stroke="#ececec" stroke-width="1.2"/><path d="M1002.6,185.6 H1008" stroke="#19b319" stroke-width="1.4"/><path d="M1006.6,183.8 L1008.8,185.6 L1006.6,187.4 Z" fill="#19b319"/><path d="M1002.2,205.3 H1006.2 L1008.8,207.9 V214.3 H1002.2 Z" fill="none" stroke="#ececec" stroke-width="1.2"/><path d="M1006,209.8 H1011.4" stroke="#19b319" stroke-width="1.4"/><path d="M1010.4,208 L1012.6,209.8 L1010.4,211.6 Z" fill="#19b319"/><rect x="998" y="224" width="22" height="1" fill="#2e2e2e"/><path d="M1004,236.5 H1008.2 A2.5,2.5 0 0 1 1008.2,241.5 H1005.5" fill="none" stroke="#ececec" stroke-width="1.3"/><path d="M1005.4,234.5 L1002.6,236.5 L1005.4,238.5 Z" fill="#ececec"/><path d="M1010,260.8 H1005.8 A2.5,2.5 0 0 0 1005.8,265.8 H1008.5" fill="none" stroke="#777" stroke-width="1.3"/><path d="M1008.6,258.8 L1011.4,260.8 L1008.6,262.8 Z" fill="#777"/><rect x="998" y="275.8" width="22" height="1" fill="#2e2e2e"/><rect x="1002.2" y="285.3" width="6.5" height="6.5" fill="#ececec"/><rect x="1005.3" y="288.6" width="7.6" height="7.4" fill="#353535"/><rect x="1006.1" y="289.4" width="6.6" height="6.6" fill="#ececec"/><circle cx="1004.4" cy="318.5" r="1.8" fill="none" stroke="#ececec" stroke-width="1.1"/><circle cx="1010.6" cy="318.5" r="1.8" fill="none" stroke="#ececec" stroke-width="1.1"/><path d="M1005.4,317 L1010.8,310.2 M1009.6,317 L1004.2,310.2" stroke="#ececec" stroke-width="1.1"/><rect x="1002.6" y="336.4" width="9" height="9" rx="0.8" fill="none" stroke="#ececec" stroke-width="1.1"/><rect x="1004.8" y="335" width="4.6" height="2.2" fill="#ececec"/><rect x="1004.6" y="338.6" width="5" height="5.6" fill="#ececec"/><rect x="996" y="356.4" width="22.6" height="21.4" rx="3.5" fill="#2f2f2f" stroke="#232323" stroke-width="1"/><path d="M1003.8,365 H1011.2 L1007.5,369.4 Z" fill="#f0f0f0"/><rect x="1" y="468" width="22" height="22" fill="#ffffff"/><path d="M2.5,469.6 L21,488.2 M21,469.6 L2.5,488.2" stroke="#cc2438" stroke-width="1.8" stroke-linecap="round"/><rect x="23.60" y="468" width="11.08" height="10.8" fill="#000000"/><rect x="35.68" y="468" width="11.08" height="10.8" fill="#1a1a1a"/><rect x="47.76" y="468" width="11.08" height="10.8" fill="#333333"/><rect x="59.84" y="468" width="11.08" height="10.8" fill="#4d4d4d"/><rect x="71.92" y="468" width="11.08" height="10.8" fill="#666666"/><rect x="84.00" y="468" width="11.08" height="10.8" fill="#808080"/><rect x="96.08" y="468" width="11.08" height="10.8" fill="#999999"/><rect x="108.16" y="468" width="11.08" height="10.8" fill="#b3b3b3"/><rect x="120.24" y="468" width="11.08" height="10.8" fill="#cccccc"/><rect x="132.32" y="468" width="11.08" height="10.8" fill="#e6e6e6"/><rect x="144.40" y="468" width="11.08" height="10.8" fill="#ececec"/><rect x="156.48" y="468" width="11.08" height="10.8" fill="#f2f2f2"/><rect x="168.56" y="468" width="11.08" height="10.8" fill="#f9f9f9"/><rect x="180.64" y="468" width="11.08" height="10.8" fill="#ffffff"/><rect x="192.72" y="468" width="11.08" height="10.8" fill="#800000"/><rect x="204.80" y="468" width="11.08" height="10.8" fill="#ff0000"/><rect x="216.88" y="468" width="11.08" height="10.8" fill="#808000"/><rect x="228.96" y="468" width="11.08" height="10.8" fill="#ffff00"/><rect x="241.04" y="468" width="11.08" height="10.8" fill="#008000"/><rect x="253.12" y="468" width="11.08" height="10.8" fill="#00ff00"/><rect x="265.20" y="468" width="11.08" height="10.8" fill="#008080"/><rect x="277.28" y="468" width="11.08" height="10.8" fill="#00ffff"/><rect x="289.36" y="468" width="11.08" height="10.8" fill="#000080"/><rect x="301.44" y="468" width="11.08" height="10.8" fill="#0000ff"/><rect x="313.52" y="468" width="11.08" height="10.8" fill="#800080"/><rect x="325.60" y="468" width="11.08" height="10.8" fill="#ff00ff"/><rect x="337.68" y="468" width="11.08" height="10.8" fill="#2b0000"/><rect x="349.76" y="468" width="11.08" height="10.8" fill="#550000"/><rect x="361.84" y="468" width="11.08" height="10.8" fill="#800000"/><rect x="373.92" y="468" width="11.08" height="10.8" fill="#aa0000"/><rect x="386.00" y="468" width="11.08" height="10.8" fill="#d40000"/><rect x="398.08" y="468" width="11.08" height="10.8" fill="#ff0000"/><rect x="410.16" y="468" width="11.08" height="10.8" fill="#ff2a2a"/><rect x="422.24" y="468" width="11.08" height="10.8" fill="#ff5555"/><rect x="434.32" y="468" width="11.08" height="10.8" fill="#ff8080"/><rect x="446.40" y="468" width="11.08" height="10.8" fill="#ffaaaa"/><rect x="458.48" y="468" width="11.08" height="10.8" fill="#ffd5d5"/><rect x="470.56" y="468" width="11.08" height="10.8" fill="#280b0b"/><rect x="482.64" y="468" width="11.08" height="10.8" fill="#501616"/><rect x="494.72" y="468" width="11.08" height="10.8" fill="#782121"/><rect x="506.80" y="468" width="11.08" height="10.8" fill="#a02c2c"/><rect x="518.88" y="468" width="11.08" height="10.8" fill="#c83737"/><rect x="530.96" y="468" width="11.08" height="10.8" fill="#d35f5f"/><rect x="543.04" y="468" width="11.08" height="10.8" fill="#de8787"/><rect x="555.12" y="468" width="11.08" height="10.8" fill="#e9afaf"/><rect x="567.20" y="468" width="11.08" height="10.8" fill="#f4d7d7"/><rect x="579.28" y="468" width="10.40" height="10.8" fill="#241c1c"/><rect x="591.10" y="468" width="10.40" height="10.8" fill="#483737"/><rect x="602.50" y="468" width="10.40" height="10.8" fill="#6c5353"/><rect x="613.90" y="468" width="10.40" height="10.8" fill="#916f6f"/><rect x="625.30" y="468" width="10.40" height="10.8" fill="#ac9393"/><rect x="636.70" y="468" width="10.40" height="10.8" fill="#c8b7b7"/><rect x="648.10" y="468" width="10.40" height="10.8" fill="#e3dbdb"/><rect x="659.50" y="468" width="10.40" height="10.8" fill="#2b1100"/><rect x="670.90" y="468" width="10.40" height="10.8" fill="#552200"/><rect x="682.30" y="468" width="10.40" height="10.8" fill="#803300"/><rect x="693.70" y="468" width="10.40" height="10.8" fill="#aa4400"/><rect x="705.10" y="468" width="10.40" height="10.8" fill="#d45500"/><rect x="716.50" y="468" width="10.40" height="10.8" fill="#ff6600"/><rect x="727.90" y="468" width="10.40" height="10.8" fill="#ff7f2a"/><rect x="739.30" y="468" width="10.40" height="10.8" fill="#ff9955"/><rect x="750.70" y="468" width="10.40" height="10.8" fill="#ffb380"/><rect x="762.10" y="468" width="10.40" height="10.8" fill="#ffccaa"/><rect x="773.50" y="468" width="10.40" height="10.8" fill="#ffe6d5"/><rect x="784.90" y="468" width="10.40" height="10.8" fill="#28170b"/><rect x="796.30" y="468" width="10.40" height="10.8" fill="#502d16"/><rect x="807.70" y="468" width="10.40" height="10.8" fill="#784421"/><rect x="819.10" y="468" width="10.40" height="10.8" fill="#a05a2c"/><rect x="830.50" y="468" width="10.40" height="10.8" fill="#c87137"/><rect x="841.90" y="468" width="10.40" height="10.8" fill="#d38d5f"/><rect x="853.30" y="468" width="10.40" height="10.8" fill="#deaa87"/><rect x="864.70" y="468" width="10.40" height="10.8" fill="#e9c6af"/><rect x="876.10" y="468" width="10.40" height="10.8" fill="#f4e3d7"/><rect x="887.50" y="468" width="10.40" height="10.8" fill="#241f1c"/><rect x="898.90" y="468" width="10.40" height="10.8" fill="#483e37"/><rect x="910.30" y="468" width="10.40" height="10.8" fill="#6c5d53"/><rect x="921.70" y="468" width="10.40" height="10.8" fill="#917c6f"/><rect x="933.10" y="468" width="10.40" height="10.8" fill="#ac9d93"/><rect x="944.50" y="468" width="10.40" height="10.8" fill="#c8beb7"/><rect x="955.90" y="468" width="10.40" height="10.8" fill="#e3dedb"/><rect x="967.30" y="468" width="10.40" height="10.8" fill="#2b2200"/><rect x="23.60" y="479.5" width="11.08" height="10.5" fill="#554400"/><rect x="35.68" y="479.5" width="11.08" height="10.5" fill="#806600"/><rect x="47.76" y="479.5" width="11.08" height="10.5" fill="#aa8800"/><rect x="59.84" y="479.5" width="11.08" height="10.5" fill="#d4aa00"/><rect x="71.92" y="479.5" width="11.08" height="10.5" fill="#ffcc00"/><rect x="84.00" y="479.5" width="11.08" height="10.5" fill="#ffd42a"/><rect x="96.08" y="479.5" width="11.08" height="10.5" fill="#ffdd55"/><rect x="108.16" y="479.5" width="11.08" height="10.5" fill="#ffe680"/><rect x="120.24" y="479.5" width="11.08" height="10.5" fill="#ffeeaa"/><rect x="132.32" y="479.5" width="11.08" height="10.5" fill="#fff6d5"/><rect x="144.40" y="479.5" width="11.08" height="10.5" fill="#28220b"/><rect x="156.48" y="479.5" width="11.08" height="10.5" fill="#504416"/><rect x="168.56" y="479.5" width="11.08" height="10.5" fill="#786721"/><rect x="180.64" y="479.5" width="11.08" height="10.5" fill="#a0892c"/><rect x="192.72" y="479.5" width="11.08" height="10.5" fill="#c8ab37"/><rect x="204.80" y="479.5" width="11.08" height="10.5" fill="#d3bc5f"/><rect x="216.88" y="479.5" width="11.08" height="10.5" fill="#decd87"/><rect x="228.96" y="479.5" width="11.08" height="10.5" fill="#e9ddaf"/><rect x="241.04" y="479.5" width="11.08" height="10.5" fill="#f4eed7"/><rect x="253.12" y="479.5" width="11.08" height="10.5" fill="#24221c"/><rect x="265.20" y="479.5" width="11.08" height="10.5" fill="#484537"/><rect x="277.28" y="479.5" width="11.08" height="10.5" fill="#6c6753"/><rect x="289.36" y="479.5" width="11.08" height="10.5" fill="#918a6f"/><rect x="301.44" y="479.5" width="11.08" height="10.5" fill="#aca793"/><rect x="313.52" y="479.5" width="11.08" height="10.5" fill="#c8c4b7"/><rect x="325.60" y="479.5" width="11.08" height="10.5" fill="#e3e1db"/><rect x="337.68" y="479.5" width="11.08" height="10.5" fill="#222b00"/><rect x="349.76" y="479.5" width="11.08" height="10.5" fill="#445500"/><rect x="361.84" y="479.5" width="11.08" height="10.5" fill="#668000"/><rect x="373.92" y="479.5" width="11.08" height="10.5" fill="#88aa00"/><rect x="386.00" y="479.5" width="11.08" height="10.5" fill="#aad400"/><rect x="398.08" y="479.5" width="11.08" height="10.5" fill="#ccff00"/><rect x="410.16" y="479.5" width="11.08" height="10.5" fill="#d4ff2a"/><rect x="422.24" y="479.5" width="11.08" height="10.5" fill="#ddff55"/><rect x="434.32" y="479.5" width="11.08" height="10.5" fill="#e5ff80"/><rect x="446.40" y="479.5" width="11.08" height="10.5" fill="#eeffaa"/><rect x="458.48" y="479.5" width="11.08" height="10.5" fill="#f6ffd5"/><rect x="470.56" y="479.5" width="11.08" height="10.5" fill="#23280b"/><rect x="482.64" y="479.5" width="11.08" height="10.5" fill="#445016"/><rect x="494.72" y="479.5" width="11.08" height="10.5" fill="#677821"/><rect x="506.80" y="479.5" width="11.08" height="10.5" fill="#89a02c"/><rect x="518.88" y="479.5" width="11.08" height="10.5" fill="#abc837"/><rect x="530.96" y="479.5" width="11.08" height="10.5" fill="#bcd35f"/><rect x="543.04" y="479.5" width="11.08" height="10.5" fill="#cdde87"/><rect x="555.12" y="479.5" width="11.08" height="10.5" fill="#dde9af"/><rect x="567.20" y="479.5" width="11.08" height="10.5" fill="#eef4d7"/><rect x="579.28" y="479.5" width="10.40" height="10.5" fill="#22241c"/><rect x="591.10" y="479.5" width="10.40" height="10.5" fill="#454837"/><rect x="602.50" y="479.5" width="10.40" height="10.5" fill="#676c53"/><rect x="613.90" y="479.5" width="10.40" height="10.5" fill="#8a916f"/><rect x="625.30" y="479.5" width="10.40" height="10.5" fill="#a7ac93"/><rect x="636.70" y="479.5" width="10.40" height="10.5" fill="#c4c8b7"/><rect x="648.10" y="479.5" width="10.40" height="10.5" fill="#e1e3db"/><rect x="659.50" y="479.5" width="10.40" height="10.5" fill="#112b00"/><rect x="670.90" y="479.5" width="10.40" height="10.5" fill="#225500"/><rect x="682.30" y="479.5" width="10.40" height="10.5" fill="#338000"/><rect x="693.70" y="479.5" width="10.40" height="10.5" fill="#44aa00"/><rect x="705.10" y="479.5" width="10.40" height="10.5" fill="#55d400"/><rect x="716.50" y="479.5" width="10.40" height="10.5" fill="#66ff00"/><rect x="727.90" y="479.5" width="10.40" height="10.5" fill="#7fff2a"/><rect x="739.30" y="479.5" width="10.40" height="10.5" fill="#99ff55"/><rect x="750.70" y="479.5" width="10.40" height="10.5" fill="#b3ff80"/><rect x="762.10" y="479.5" width="10.40" height="10.5" fill="#ccffaa"/><rect x="773.50" y="479.5" width="10.40" height="10.5" fill="#e5ffd5"/><rect x="784.90" y="479.5" width="10.40" height="10.5" fill="#17280b"/><rect x="796.30" y="479.5" width="10.40" height="10.5" fill="#2d5016"/><rect x="807.70" y="479.5" width="10.40" height="10.5" fill="#447821"/><rect x="819.10" y="479.5" width="10.40" height="10.5" fill="#5aa02c"/><rect x="830.50" y="479.5" width="10.40" height="10.5" fill="#71c837"/><rect x="841.90" y="479.5" width="10.40" height="10.5" fill="#8dd35f"/><rect x="853.30" y="479.5" width="10.40" height="10.5" fill="#aade87"/><rect x="864.70" y="479.5" width="10.40" height="10.5" fill="#c6e9af"/><rect x="876.10" y="479.5" width="10.40" height="10.5" fill="#e3f4d7"/><rect x="887.50" y="479.5" width="10.40" height="10.5" fill="#1f241c"/><rect x="898.90" y="479.5" width="10.40" height="10.5" fill="#3e4837"/><rect x="910.30" y="479.5" width="10.40" height="10.5" fill="#5d6c53"/><rect x="921.70" y="479.5" width="10.40" height="10.5" fill="#7c916f"/><rect x="933.10" y="479.5" width="10.40" height="10.5" fill="#9dac93"/><rect x="944.50" y="479.5" width="10.40" height="10.5" fill="#bec8b7"/><rect x="955.90" y="479.5" width="10.40" height="10.5" fill="#dee3db"/><rect x="967.30" y="479.5" width="10.40" height="10.5" fill="#002b00"/><path d="M982,481.2 L985.9,477.3 L989.8,481.2" fill="none" stroke="#6c6c6c" stroke-width="1.2"/><path d="M997.2,476.5 L1001.3,480.5 L1005.4,476.5" fill="none" stroke="#f0f0f0" stroke-width="1.3"/><rect x="1011" y="477" width="9.8" height="1.5" fill="#e6e6e6"/><rect x="1011" y="481" width="9.8" height="1.5" fill="#e6e6e6"/><rect x="1011" y="484.6" width="9.8" height="1.5" fill="#e6e6e6"/><rect x="127.8" y="492.0" width="46.89999999999999" height="24.5" rx="4.5" fill="#2f2f2f" stroke="#232323" stroke-width="1"/><rect x="151.7" y="492.5" width="1" height="23.5" fill="#292929"/><rect x="163.2" y="492.5" width="1" height="23.5" fill="#292929"/><rect x="153.7" y="503.8" width="8" height="1.2" fill="#6a6a6a"/><rect x="165.2" y="503.8" width="8" height="1.2" fill="#6a6a6a"/><rect x="168.6" y="500.1" width="1.2" height="8" fill="#6a6a6a"/><rect x="183.3" y="497.8" width="2" height="11.6" fill="#f0f0f0"/><path d="M228.9,504.3 Q233.5,499.6 238.1,504.3 Q233.5,509 228.9,504.3 Z" fill="none" stroke="#9c9c9c" stroke-width="1.3"/><circle cx="233.5" cy="504.2" r="1.3" fill="#9c9c9c"/><path d="M233.5,499 V501.2 M229.2,500.8 L230.6,502.2 M237.8,500.8 L236.4,502.2" stroke="#9c9c9c" stroke-width="1.2"/><rect x="254.1" y="503.2" width="6.9" height="5" fill="#8a8a8a"/><path d="M258.9,503.4 V501.4 A2.05,2.05 0 0 1 263,501.4 V502.6" fill="none" stroke="#8a8a8a" stroke-width="1.4"/><path d="M36,332.6 L39.8,335.6 L36,338.6 L37,335.6 Z" fill="#f0f0f0"/><path d="M745.5,499.6 V507 L741,503.3 Z" fill="#6a6a6a"/><rect x="755.8" y="492" width="23" height="25" rx="4" fill="#2f2f2f" stroke="#262626" stroke-width="1"/><path d="M763,501.5 H771 L767,505 Z" fill="#6a6a6a"/><path d="M788.6,499.6 V507 L793.2,503.3 Z" fill="#6a6a6a"/><rect x="795" y="492" width="1" height="23" fill="#262626"/><rect x="870.9" y="491.9" width="59.10000000000002" height="24.600000000000023" rx="4.5" fill="#2f2f2f" stroke="#232323" stroke-width="1"/><rect x="907.0" y="492.4" width="1" height="23.600000000000023" fill="#292929"/><rect x="918.5" y="492.4" width="1" height="23.600000000000023" fill="#292929"/><rect x="909.0" y="503.7" width="8" height="1.2" fill="#e6e6e6"/><rect x="920.5" y="503.7" width="8" height="1.2" fill="#e6e6e6"/><rect x="923.9" y="500.1" width="1.2" height="8" fill="#e6e6e6"/><rect x="951.6" y="491.9" width="64.10000000000002" height="24.600000000000023" rx="4.5" fill="#2f2f2f" stroke="#232323" stroke-width="1"/><rect x="992.7" y="492.4" width="1" height="23.600000000000023" fill="#292929"/><rect x="1004.2" y="492.4" width="1" height="23.600000000000023" fill="#292929"/><rect x="994.7" y="503.7" width="8" height="1.2" fill="#e6e6e6"/><rect x="1006.2" y="503.7" width="8" height="1.2" fill="#e6e6e6"/><rect x="1009.6" y="500.1" width="1.2" height="8" fill="#e6e6e6"/>
</svg>
<div class="t" style="left:0;width:1024px;text-align:center;top:7px;font-size:9.5px;font-weight:700;color:#3a3a3a;text-indent:0px">blr hp papiersackfabrik - stationsschild-.svg - Inkscape</div><div class="t" style="left:5.8px;top:28.00px;font-size:10px;color:#d2d2d2;font-weight:400;">Datei</div><div class="t" style="left:40.8px;top:28.00px;font-size:10px;color:#d2d2d2;font-weight:400;">Bearbeiten</div><div class="t" style="left:101px;top:28.00px;font-size:10px;color:#d2d2d2;font-weight:400;">Ansicht</div><div class="t" style="left:144.6px;top:28.00px;font-size:10px;color:#d2d2d2;font-weight:400;">Ebene</div><div class="t" style="left:182.6px;top:28.00px;font-size:10px;color:#d2d2d2;font-weight:400;">Objekt</div><div class="t" style="left:224px;top:28.00px;font-size:10px;color:#d2d2d2;font-weight:400;">Pfad</div><div class="t" style="left:256.2px;top:28.00px;font-size:10px;color:#d2d2d2;font-weight:400;">Text</div><div class="t" style="left:285.6px;top:28.00px;font-size:10px;color:#d2d2d2;font-weight:400;">Filter</div><div class="t" style="left:320.6px;top:28.00px;font-size:10px;color:#d2d2d2;font-weight:400;">Erweiterungen</div><div class="t" style="left:395.8px;top:28.00px;font-size:10px;color:#d2d2d2;font-weight:400;">Hilfe</div><div class="t" style="left:345.3px;top:51.00px;font-size:10px;color:#a0a0a0;font-weight:400;">X:</div><div class="t" style="left:441px;top:51.00px;font-size:10px;color:#a0a0a0;font-weight:400;">Y:</div><div class="t" style="left:536.6px;top:51.00px;font-size:10px;color:#a0a0a0;font-weight:400;">B:</div><div class="t" style="left:659.7px;top:51.00px;font-size:10px;color:#a0a0a0;font-weight:400;">H:</div><div class="t" style="left:360.3px;top:51.00px;font-size:10px;color:#757575;font-weight:400;">0,640</div><div class="t" style="left:455.8px;top:51.00px;font-size:10px;color:#757575;font-weight:400;">0,646</div><div class="t" style="left:551px;top:51.00px;font-size:10px;color:#757575;font-weight:400;">8,438</div><div class="t" style="left:675.5px;top:51.00px;font-size:10px;color:#757575;font-weight:400;">1,131</div><div class="t" style="left:764.6px;top:51.00px;font-size:10px;color:#d0d0d0;font-weight:400;">mm</div><div class="t" style="left:705.3px;top:127.30px;font-size:10px;color:#dcdcdc;font-weight:400;">Stationsname</div><div class="t" style="left:705.3px;top:143.70px;font-size:10px;color:#dcdcdc;font-weight:400;">Rahmen</div><div class="t" style="left:0.6px;top:492.70px;font-size:10px;color:#cfcfcf;font-weight:400;">Füllung:</div><div class="t" style="left:0.6px;top:504.80px;font-size:10px;color:#cfcfcf;font-weight:400;">Kontur:</div><div class="t" style="left:55.9px;top:492.70px;font-size:10px;color:#cfcfcf;font-weight:400;">N/V</div><div class="t" style="left:55.9px;top:504.80px;font-size:10px;color:#cfcfcf;font-weight:400;">N/V</div><div class="t" style="left:113.7px;top:499.00px;font-size:10px;color:#cfcfcf;font-weight:400;">O:</div><div class="t" style="left:133.2px;top:499.00px;font-size:10px;color:#757575;font-weight:400;">100</div><div class="t" style="left:188.9px;top:499.00px;font-size:10px;color:#cfcfcf;font-weight:400;font-style:italic">[root]</div><div class="t" style="left:275.8px;top:494.00px;font-size:10px;color:#d4d4d4;font-weight:400;letter-spacing:-0.1px"><b>Alt</b> festhalten, um Objekt hervorzuheben, wenn die Maus sich darüber befindet, <b>Umschalt + Klicken</b></div><div class="t" style="left:275.7px;top:503.00px;font-size:10px;color:#d4d4d4;font-weight:400;">zum Verbergen/Sperren aller Objekte</div><div class="t" style="left:808.3px;top:493.30px;font-size:10px;color:#cfcfcf;font-weight:400;">X:</div><div class="t" style="left:808.3px;top:504.50px;font-size:10px;color:#cfcfcf;font-weight:400;">Y:</div><div class="t" style="left:827.7px;top:493.30px;font-size:10px;color:#cfcfcf;font-weight:400;">17,77</div><div class="t" style="left:829.5px;top:504.50px;font-size:10px;color:#cfcfcf;font-weight:400;">-0,70</div><div class="t" style="left:859.7px;top:499.00px;font-size:10px;color:#cfcfcf;font-weight:400;">Z:</div><div class="t" style="left:876.4px;top:499.00px;font-size:10px;color:#cfcfcf;font-weight:400;">1434%</div><div class="t" style="left:938.5px;top:499.00px;font-size:10px;color:#cfcfcf;font-weight:400;">D:</div><div class="t" style="left:961.4px;top:499.00px;font-size:10px;color:#cfcfcf;font-weight:400;">0,00°</div>
</div>
</body></html>
